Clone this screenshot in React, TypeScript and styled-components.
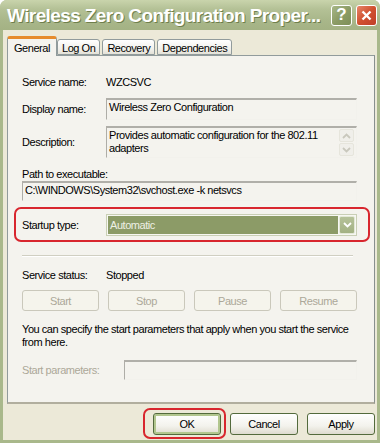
import styled, { createGlobalStyle } from "styled-components";

const GlobalStyle = createGlobalStyle`
  html, body {
    margin: 0;
    padding: 0;
    background: #ffffff;
  }
  body {
    font-family: "Liberation Sans", Arial, sans-serif;
    font-size: 11px;
    letter-spacing: -0.45px;
    color: #000000;
  }
`;

const Window = styled.div`
  width: 380px;
  height: 443px;
  box-sizing: border-box;
  display: flex;
  flex-direction: column;
  background: #a9b88b;
  border-radius: 7px 7px 0 0;
  overflow: hidden;
`;

const TitleBar = styled.div`
  height: 30px;
  flex: none;
  display: flex;
  align-items: center;
  padding: 0 3px 0 7px;
  background: linear-gradient(#c9d4ac 0%, #b4c196 30%, #a8b689 70%, #a4b284 100%);
`;

const Title = styled.div`
  flex: 1;
  color: #ffffff;
  font-weight: bold;
  font-size: 19px;
  letter-spacing: -0.6px;
  text-shadow: 1px 1px 0 #6f7f4c;
  white-space: nowrap;
  padding-top: 1px;
`;

const CapButton = styled.div<{ $kind: "help" | "close" }>`
  width: 19px;
  height: 19px;
  margin-left: ${(p) => (p.$kind === "close" ? "4px" : "0")};
  border: 1px solid #ffffff;
  border-radius: 3px;
  display: flex;
  align-items: center;
  justify-content: center;
  color: #ffffff;
  font-weight: bold;
  font-size: 17px;
  letter-spacing: 0;
  background: ${(p) =>
    p.$kind === "close"
      ? "linear-gradient(135deg, #e6866a, #d0502f 50%, #c0402a)"
      : "linear-gradient(135deg, #a8b888, #8c9c66 50%, #7e8f58)"};
`;

const Body = styled.div`
  flex: 1;
  margin: 0 3px 3px 3px;
  background: #ece9d8;
  display: flex;
  flex-direction: column;
  padding: 6px 2px 0 4px;
`;

const TabStrip = styled.div`
  display: flex;
  align-items: flex-end;
  height: 19px;
  position: relative;
  z-index: 1;
`;

const Tab = styled.div<{ $active?: boolean }>`
  box-sizing: border-box;
  height: ${(p) => (p.$active ? "20px" : "16px")};
  padding: ${(p) => (p.$active ? "3px 6px 0 6px" : "2px 4px 0 4px")};
  margin-right: ${(p) => (p.$active ? "0" : "2px")};
  margin-bottom: ${(p) => (p.$active ? "-1px" : "0")};
  border: 1px solid #919b9c;
  border-bottom: ${(p) => (p.$active ? "none" : "1px solid #919b9c")};
  border-top: ${(p) => (p.$active ? "3px solid #e68b2c" : "1px solid #919b9c")};
  border-radius: 3px 3px 0 0;
  background: ${(p) =>
    p.$active ? "#f4f3ee" : "linear-gradient(#ffffff, #f0efe9 70%, #e3e1d7)"};
  white-space: nowrap;
`;

const Panel = styled.div`
  height: 349px;
  box-sizing: border-box;
  border: 1px solid #919b9c;
  border-right-color: #888f8f;
  border-bottom: 2px solid #b1ae9e;
  background: #f4f3ee;
  padding: 20px 17px 0 14px;
  display: flex;
  flex-direction: column;
`;

const Row = styled.div<{ $top?: number; $col?: number }>`
  display: grid;
  grid-template-columns: ${(p) => p.$col ?? 84}px 1fr;
  align-items: center;
  margin-top: ${(p) => p.$top ?? 0}px;
`;

const Label = styled.div<{ $disabled?: boolean }>`
  color: ${(p) => (p.$disabled ? "#aca899" : "#000000")};
  white-space: nowrap;
`;

const Field = styled.div<{ $h: number }>`
  height: ${(p) => p.$h}px;
  box-sizing: border-box;
  border-style: solid;
  border-width: 2px 1px 1px 1px;
  border-color: #b0afa9 #f2f1ec #f2f1ec #aeada7;
  padding: 1px 2px;
  display: flex;
  background: #f4f3ee;
  line-height: 13px;
`;

const FieldText = styled.div`
  flex: 1;
`;

const ScrollCol = styled.div`
  display: flex;
  flex-direction: column;
  gap: 1px;
  margin: 0 0 0 4px;
`;

const ScrollArrow = styled.div`
  width: 15px;
  height: 13px;
  box-sizing: border-box;
  border: 1px solid #e6e5dc;
  border-radius: 2px;
  background: #f0efea;
  display: flex;
  align-items: center;
  justify-content: center;
`;

const PlainLabel = styled.div<{ $top: number }>`
  margin-top: ${(p) => p.$top}px;
  line-height: 14px;
`;

const Highlight = styled.div<{ $l: number; $r: number; $t: number; $b: number }>`
  position: relative;
  &::after {
    content: "";
    position: absolute;
    left: ${(p) => p.$l}px;
    right: ${(p) => p.$r}px;
    top: ${(p) => p.$t}px;
    bottom: ${(p) => p.$b}px;
    border: 2px solid #d8262e;
    border-radius: 7px;
    pointer-events: none;
  }
`;

const StartupBlock = styled(Highlight)`
  margin-top: 13px;
`;

const Combo = styled.div`
  height: 22px;
  box-sizing: border-box;
  border: 1px solid #c9cfb5;
  background: #f7f7f2;
  padding: 1px;
  display: flex;
  gap: 1px;
`;

const ComboValue = styled.div`
  flex: 1;
  background: #8c9b67;
  color: #eef0e4;
  padding-left: 2px;
  display: flex;
  align-items: center;
`;

const ComboArrow = styled.div`
  width: 16px;
  box-sizing: border-box;
  border: 1px solid #e3e8d6;
  border-radius: 2px;
  background: linear-gradient(#b6c29a, #a3b183);
  display: flex;
  align-items: center;
  justify-content: center;
`;

const Separator = styled.div`
  margin: 19px 4px 0 0;
  height: 1px;
  background: #d0cfc2;
  border-bottom: 1px solid #ffffff;
`;

const ButtonRow = styled.div`
  margin-top: 9px;
  display: grid;
  grid-template-columns: repeat(4, 1fr);
  column-gap: 9px;
`;

const DisabledButton = styled.div`
  height: 21px;
  box-sizing: border-box;
  border: 1px solid #cac8bb;
  border-radius: 3px;
  background: #f5f4ec;
  color: #aca899;
  display: flex;
  align-items: center;
  justify-content: center;
`;

const Paragraph = styled.div`
  margin-top: 12px;
  line-height: 13px;
  padding-right: 4px;
`;

const Footer = styled.div`
  display: flex;
  justify-content: flex-end;
  gap: 9px;
  margin-top: 9px;
`;

const DialogButton = styled.div<{ $default?: boolean }>`
  width: 68px;
  height: 22px;
  box-sizing: border-box;
  border: 1px solid #536a3c;
  border-radius: 3px;
  background: linear-gradient(#ffffff, #f3f2ec 60%, #dedbcf);
  display: flex;
  align-items: center;
  justify-content: center;
  box-shadow: ${(p) => (p.$default ? "inset 0 0 0 2px #b2c68e" : "none")};
`;

const Chevron = ({ up, color }: { up?: boolean; color: string }) => (
  <svg width="9" height="6" viewBox="0 0 9 6">
    <path
      d={up ? "M1 5 L4.5 1.5 L8 5" : "M1 1 L4.5 4.5 L8 1"}
      fill="none"
      stroke={color}
      strokeWidth="1.8"
    />
  </svg>
);

export default function App() {
  return (
    <>
      <GlobalStyle />
      <Window>
        <TitleBar>
          <Title>Wireless Zero Configuration Proper...</Title>
          <CapButton $kind="help">?</CapButton>
          <CapButton $kind="close">
            <svg width="11" height="11" viewBox="0 0 11 11">
              <path d="M1.5 1.5 L9.5 9.5 M9.5 1.5 L1.5 9.5" stroke="#ffffff" strokeWidth="2.4" />
            </svg>
          </CapButton>
        </TitleBar>
        <Body>
          <TabStrip>
            <Tab $active>General</Tab>
            <Tab>Log On</Tab>
            <Tab>Recovery</Tab>
            <Tab>Dependencies</Tab>
          </TabStrip>
          <Panel>
            <Row>
              <Label>Service name:</Label>
              <div>WZCSVC</div>
            </Row>
            <Row $top={10}>
              <Label>Display name:</Label>
              <Field $h={22}>
                <FieldText>Wireless Zero Configuration</FieldText>
              </Field>
            </Row>
            <Row $top={6}>
              <Label>Description:</Label>
              <Field $h={32}>
                <FieldText>Provides automatic configuration for the 802.11 adapters</FieldText>
                <ScrollCol>
                  <ScrollArrow>
                    <Chevron up color="#c9c8bd" />
                  </ScrollArrow>
                  <ScrollArrow>
                    <Chevron color="#c9c8bd" />
                  </ScrollArrow>
                </ScrollCol>
              </Field>
            </Row>
            <PlainLabel $top={9}>Path to executable:</PlainLabel>
            <Field $h={20}>
              <FieldText>C:\WINDOWS\System32\svchost.exe -k netsvcs</FieldText>
            </Field>
            <StartupBlock $l={-8} $r={-13} $t={-7} $b={-6}>
              <Row>
                <Label>Startup type:</Label>
                <Combo>
                  <ComboValue>Automatic</ComboValue>
                  <ComboArrow>
                    <Chevron color="#ffffff" />
                  </ComboArrow>
                </Combo>
              </Row>
            </StartupBlock>
            <Separator />
            <Row $top={12}>
              <Label>Service status:</Label>
              <div>Stopped</div>
            </Row>
            <ButtonRow>
              <DisabledButton>Start</DisabledButton>
              <DisabledButton>Stop</DisabledButton>
              <DisabledButton>Pause</DisabledButton>
              <DisabledButton>Resume</DisabledButton>
            </ButtonRow>
            <Paragraph>
              You can specify the start parameters that apply when you start the service from here.
            </Paragraph>
            <Row $top={11} $col={102}>
              <Label $disabled>Start parameters:</Label>
              <Field $h={20} />
            </Row>
          </Panel>
          <Footer>
            <Highlight $l={-10} $r={-5} $t={-5} $b={-4}>
              <DialogButton $default>OK</DialogButton>
            </Highlight>
            <DialogButton>Cancel</DialogButton>
            <DialogButton>Apply</DialogButton>
          </Footer>
        </Body>
      </Window>
    </>
  );
}
